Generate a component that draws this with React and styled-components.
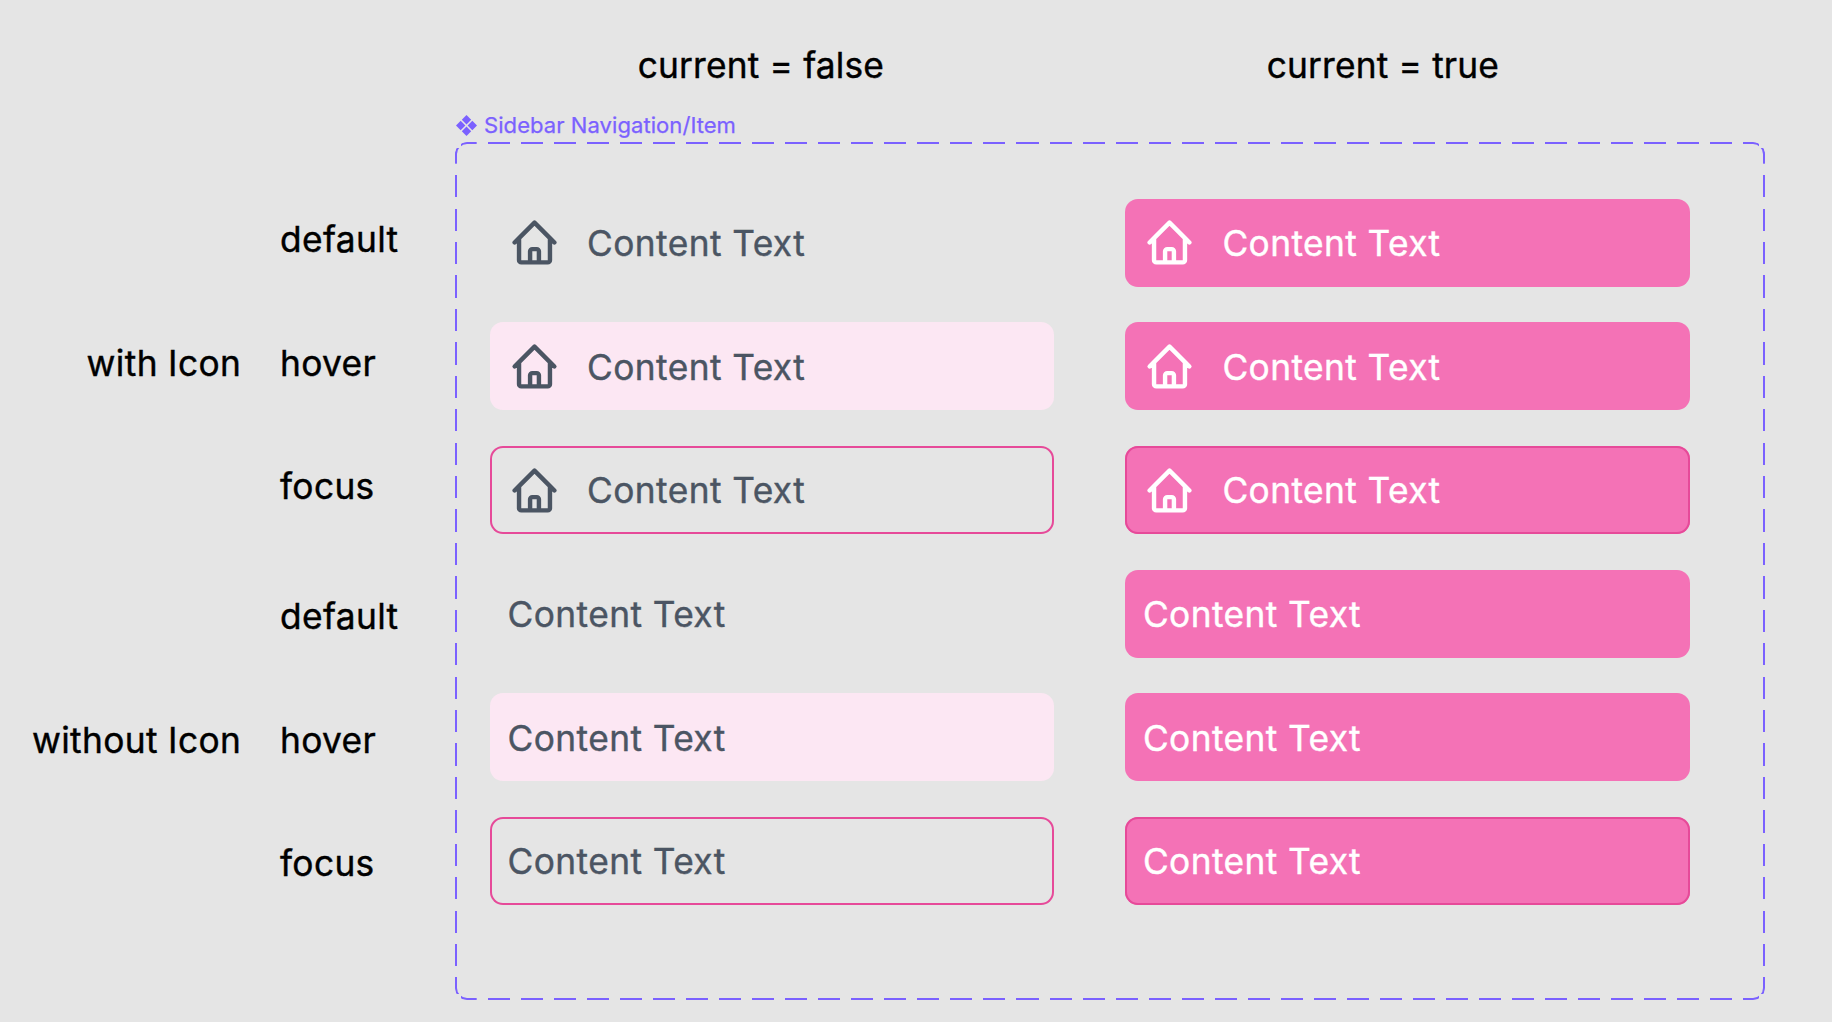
import React from "react";
import styled, { createGlobalStyle, css } from "styled-components";

const color = {
  canvas: "#e5e5e5",
  ink: "#000000",
  component: "#7b61ff",
  gray: "#4b5563",
  pinkSoft: "#fce7f3",
  pink: "#f472b6",
  pinkRing: "#e64a99",
};

const GlobalStyle = createGlobalStyle`
  *, *::before { box-sizing: border-box; }
  body {
    margin: 0;
    background: ${color.canvas};
    font-family: Inter, "Liberation Sans", sans-serif;
  }
`;

const Page = styled.main`
  width: 1832px;
  height: 1022px;
  padding-top: 44px;
  overflow: hidden;
  background: ${color.canvas};
  color: ${color.ink};
  font-size: 35.3px;
  font-weight: 400;
  letter-spacing: 0.35px;
  -webkit-text-stroke: 0.4px currentColor;
`;

const ColumnTitles = styled.header`
  display: grid;
  grid-template-columns: 629px 1fr;
  height: 68px;
  padding-left: 637.7px;
  letter-spacing: 0.17px;
  line-height: 44px;
`;

const ColumnTitle = styled.h2`
  margin: 0;
  font: inherit;
`;

const Board = styled.div`
  display: grid;
  grid-template-columns: 455px 1310px;
`;

const Legend = styled.aside`
  display: flex;
  flex-direction: column;
  gap: 42.2px;
  padding-top: 84px;
`;

const LegendGroup = styled.section`
  display: grid;
  grid-template-columns: 241.2px 1fr;
  column-gap: 38.8px;
  align-items: center;
`;

const rowHeight = css`
  height: 88px;
  line-height: 88px;
  white-space: nowrap;
`;

const Kind = styled.div`
  ${rowHeight}
  text-align: right;
`;

const Stack = styled.div`
  display: flex;
  flex-direction: column;
  gap: 35.57px;
`;

const StateName = styled.div`
  ${rowHeight}
`;

const ComponentSet = styled.section`
  display: flex;
  flex-direction: column;
`;

const SetName = styled.div`
  display: flex;
  align-items: center;
  gap: 7px;
  height: 27px;
  margin-bottom: 3px;
  padding-left: 1px;
  color: ${color.component};
  font-size: 22.07px;
  letter-spacing: 0.04px;
  line-height: 27px;
  -webkit-text-stroke-width: 0.25px;
  -webkit-text-stroke-color: ${color.component};
`;

const cornerX = "linear-gradient(90deg, #000 15.7px, transparent 15.7px)";
const cornerY = "linear-gradient(180deg, #000 15.7px, transparent 15.7px)";
const dashX =
  "repeating-linear-gradient(90deg, transparent 0 11px, #000 11px 33.03px)";
const dashY =
  "repeating-linear-gradient(180deg, transparent 0 11.1px, #000 11.1px 33.43px)";

/* A solid rounded border, cut into long dashes by mask strips along each edge. */
const Frame = styled.div`
  position: relative;
  display: grid;
  grid-template-columns: 564px 564.6px;
  column-gap: 71.4px;
  align-items: start;
  height: 858px;
  padding: 56.9px 0 0 35px;

  &::before {
    content: "";
    position: absolute;
    inset: 0;
    border: 2px solid ${color.component};
    border-radius: 12px;
    pointer-events: none;
    mask-image: ${cornerX}, ${cornerX}, ${cornerY}, ${cornerY}, ${dashX},
      ${dashX}, ${dashY}, ${dashY};
    mask-origin: border-box;
    mask-clip: border-box;
    mask-repeat: no-repeat;
    mask-size: 15.7px 5px, 15.7px 5px, 5px 15.7px, 5px 15.7px,
      calc(100% - 27.7px) 5px, calc(100% - 27.7px) 5px,
      5px calc(100% - 27.7px), 5px calc(100% - 27.7px);
    mask-position: 6px 0, 6px 100%, 0 6px, 100% 6px, right 6px top 0,
      right 6px bottom 0, left 0 bottom 6px, right 0 bottom 6px;
  }
`;

const Item = styled.a`
  ${rowHeight}
  display: flex;
  align-items: center;
  gap: 26.5px;
  padding-left: 17.5px;
  border-radius: 13px;
  color: ${(p) => (p.$current ? "#ffffff" : color.gray)};
  background: ${(p) =>
    p.$current
      ? color.pink
      : p.$state === "hover"
      ? color.pinkSoft
      : "transparent"};
  box-shadow: ${(p) =>
    p.$state === "focus" ? `inset 0 0 0 2px ${color.pinkRing}` : "none"};
`;

const ItemText = styled.span`
  padding-top: 2.8px;
  letter-spacing: 0.41px;
  -webkit-text-stroke-color: currentColor;
`;

const HomeSvg = styled.svg`
  flex: none;
  width: 53px;
  height: 53px;
`;

const SetSvg = styled.svg`
  flex: none;
  width: 21px;
  height: 21px;
`;

function HomeIcon() {
  return (
    <HomeSvg
      viewBox="0 0 24 24"
      fill="none"
      stroke="currentColor"
      strokeWidth="2"
      strokeLinecap="round"
      strokeLinejoin="round"
      aria-hidden="true"
    >
      <path d="M3 12l2-2m0 0l7-7 7 7M5 10v10a1 1 0 001 1h3m10-11l2 2m-2-2v10a1 1 0 01-1 1h-3m-6 0a1 1 0 001-1v-4a1 1 0 011-1h2a1 1 0 011 1v4a1 1 0 001 1m-6 0h6" />
    </HomeSvg>
  );
}

function ComponentSetIcon() {
  return (
    <SetSvg viewBox="0 0 21 21" fill="currentColor" aria-hidden="true">
      <path d="M10.5 0l4.7 4.7-4.7 4.7-4.7-4.7zM10.5 11.6l4.7 4.7-4.7 4.7-4.7-4.7zM4.7 5.8l4.7 4.7-4.7 4.7L0 10.5zM16.3 5.8l4.7 4.7-4.7 4.7-4.7-4.7z" />
    </SetSvg>
  );
}

const states = ["default", "hover", "focus"];
const kinds = [
  { label: "with Icon", icon: true },
  { label: "without Icon", icon: false },
];

function VariantColumn({ current }) {
  return (
    <Stack>
      {kinds.map((kind) =>
        states.map((state) => (
          <Item key={kind.label + state} $current={current} $state={state}>
            {kind.icon && <HomeIcon />}
            <ItemText>Content Text</ItemText>
          </Item>
        ))
      )}
    </Stack>
  );
}

export default function App() {
  return (
    <Page>
      <GlobalStyle />
      <ColumnTitles>
        <ColumnTitle>current = false</ColumnTitle>
        <ColumnTitle>current = true</ColumnTitle>
      </ColumnTitles>
      <Board>
        <Legend>
          {kinds.map((kind) => (
            <LegendGroup key={kind.label}>
              <Kind>{kind.label}</Kind>
              <Stack>
                {states.map((state) => (
                  <StateName key={state}>{state}</StateName>
                ))}
              </Stack>
            </LegendGroup>
          ))}
        </Legend>
        <ComponentSet>
          <SetName>
            <ComponentSetIcon />
            <span>Sidebar Navigation/Item</span>
          </SetName>
          <Frame>
            <VariantColumn current={false} />
            <VariantColumn current />
          </Frame>
        </ComponentSet>
      </Board>
    </Page>
  );
}
